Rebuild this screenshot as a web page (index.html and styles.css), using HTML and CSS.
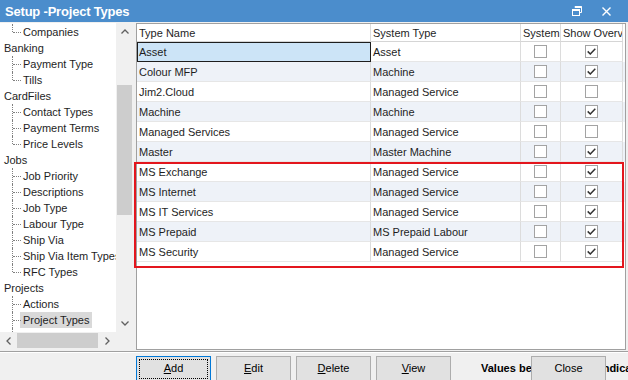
FILE: index.html
```html
<!DOCTYPE html>
<html lang="en">
<head>
    <meta charset="UTF-8">
    <title>Setup -Project Types</title>
    <link rel="stylesheet" href="styles.css">
</head>
<body>

    <div class="window">
        <!-- Title bar -->
        <div class="titlebar">
            <span class="title">Setup -Project Types</span>
            <div class="title-buttons">
                <svg width="10" height="10" viewBox="0 0 10 10">
                    <path d="M3 1.5V0.5H9.5V6.5H7.5" fill="none" stroke="#fff" stroke-width="1"/>
                    <path d="M3 1h6.5" stroke="#fff" stroke-width="2"/>
                    <rect x="0.5" y="3.5" width="7" height="6" fill="none" stroke="#fff" stroke-width="1"/>
                    <path d="M0.5 4h7" stroke="#fff" stroke-width="2"/>
                </svg>
                <svg width="9" height="9" viewBox="0 0 9 9">
                    <path d="M0.5 0.5L8.5 8.5M8.5 0.5L0.5 8.5" stroke="#fff" stroke-width="1.4"/>
                </svg>
            </div>
        </div>

        <div class="main">
            <!-- Setup tree -->
            <div class="tree-pane">
                <ul class="tree">
                    <li class="child last"><span class="label">Companies</span></li>
                    <li class="top"><span class="label">Banking</span></li>
                    <li class="child"><span class="label">Payment Type</span></li>
                    <li class="child last"><span class="label">Tills</span></li>
                    <li class="top"><span class="label">CardFiles</span></li>
                    <li class="child"><span class="label">Contact Types</span></li>
                    <li class="child"><span class="label">Payment Terms</span></li>
                    <li class="child last"><span class="label">Price Levels</span></li>
                    <li class="top"><span class="label">Jobs</span></li>
                    <li class="child"><span class="label">Job Priority</span></li>
                    <li class="child"><span class="label">Descriptions</span></li>
                    <li class="child"><span class="label">Job Type</span></li>
                    <li class="child"><span class="label">Labour Type</span></li>
                    <li class="child"><span class="label">Ship Via</span></li>
                    <li class="child"><span class="label">Ship Via Item Types</span></li>
                    <li class="child last"><span class="label">RFC Types</span></li>
                    <li class="top"><span class="label">Projects</span></li>
                    <li class="child"><span class="label">Actions</span></li>
                    <li class="child selected"><span class="label">Project Types</span></li>
                    <li class="child"><span class="label">Service Levels</span></li>
                </ul>

                <div class="vscroll">
                    <div class="arrow">
                        <svg width="8" height="5" viewBox="0 0 8 5"><path d="M0.5 4.5L4 1L7.5 4.5" fill="none" stroke="#606060" stroke-width="1.3"/></svg>
                    </div>
                    <div class="track-v"><div class="thumb-v"></div></div>
                    <div class="arrow">
                        <svg width="8" height="5" viewBox="0 0 8 5"><path d="M0.5 0.5L4 4L7.5 0.5" fill="none" stroke="#606060" stroke-width="1.3"/></svg>
                    </div>
                </div>

                <div class="hscroll">
                    <div class="arrow">
                        <svg width="5" height="8" viewBox="0 0 5 8"><path d="M4.5 0.5L1 4L4.5 7.5" fill="none" stroke="#606060" stroke-width="1.3"/></svg>
                    </div>
                    <div class="track-h"><div class="thumb-h"></div></div>
                    <div class="arrow">
                        <svg width="5" height="8" viewBox="0 0 5 8"><path d="M0.5 0.5L4 4L0.5 7.5" fill="none" stroke="#606060" stroke-width="1.3"/></svg>
                    </div>
                </div>
                <div class="corner"></div>
            </div>

            <!-- Project types grid -->
            <div class="grid-pane">
                <div class="grid-row grid-head">
                    <div class="cell">Type Name</div>
                    <div class="cell">System Type</div>
                    <div class="cell">System</div>
                    <div class="cell">Show Overview</div>
                </div>
                <div id="rows"></div>
            </div>

            <!-- marked rows -->
            <div class="mark-box"></div>
        </div>

        <!-- Buttons -->
        <div class="footer">
            <button class="btn btn-default"><u>A</u>dd</button>
            <button class="btn"><u>E</u>dit</button>
            <button class="btn"><u>D</u>elete</button>
            <button class="btn"><u>V</u>iew</button>
            <span class="legend">Values being used are indicated</span>
            <button class="btn close-btn">Close</button>
        </div>
    </div>

    <script type="text/javascript">
        //name, system type, system, show overview
        const types = [
            ['Asset', 'Asset', false, true],
            ['Colour MFP', 'Machine', false, true],
            ['Jim2.Cloud', 'Managed Service', false, false],
            ['Machine', 'Machine', false, true],
            ['Managed Services', 'Managed Service', false, false],
            ['Master', 'Master Machine', false, true],
            ['MS Exchange', 'Managed Service', false, true],
            ['MS Internet', 'Managed Service', false, true],
            ['MS IT Services', 'Managed Service', false, true],
            ['MS Prepaid', 'MS Prepaid Labour', false, true],
            ['MS Security', 'Managed Service', false, true]
        ];

        const tick = '<svg width="9" height="7" viewBox="0 0 9 7"><path d="M0.7 3.4L3.3 6L8.3 0.8" fill="none" stroke="#333" stroke-width="1.5"/></svg>';

        const checkbox = on => '<div class="cell check"><span class="box">' + (on ? tick : '') + '</span></div>';

        let html = '';
        types.forEach((t, i) => {
            html += '<div class="grid-row' + (i % 2 ? ' alt' : '') + '">'
                + '<div class="cell' + (i === 0 ? ' focus' : '') + '">' + t[0] + '</div>'
                + '<div class="cell">' + t[1] + '</div>'
                + checkbox(t[2]) + checkbox(t[3])
                + '</div>';
        });
        document.getElementById('rows').innerHTML = html;
    </script>
</body>
</html>
```

FILE: styles.css
```css
body {
    margin: 0;
    font-family: "Liberation Sans", Arial, sans-serif;
    font-size: 11px;
    color: #1e1e1e;
}

.window {
    width: 628px;
    height: 380px;
    background-color: #f0f0f0;
    display: flex;
    flex-direction: column;
    overflow: hidden;
}

/* Title bar */
.titlebar {
    height: 22px;
    flex: none;
    display: flex;
    align-items: center;
    background-color: #4b8dcc;
    color: #ffffff;
}

.title {
    padding-left: 5px;
    font-size: 13px;
    font-weight: bold;
    letter-spacing: -0.2px;
}

.title-buttons {
    margin-left: auto;
    padding-right: 17px;
    display: flex;
    align-items: center;
    gap: 20px;
}

.title-buttons svg {
    display: block;
}

/* Main area */
.main {
    position: relative;
    height: 329px;
    flex: none;
    display: flex;
    align-items: flex-start;
    padding-top: 1px;
    box-sizing: border-box;
}

/* Tree */
.tree-pane {
    width: 133px;
    height: 326px;
    display: grid;
    grid-template-columns: 116px 17px;
    grid-template-rows: 309px 17px;
}

.tree {
    list-style: none;
    margin: 0;
    padding: 1px 0 0;
    overflow: hidden;
    background-color: #ffffff;
}

.tree li {
    position: relative;
    height: 16px;
    line-height: 16px;
    white-space: nowrap;
}

.tree .top {
    padding-left: 1px;
}

.tree .child {
    padding-left: 20px;
}

.tree .child::before {
    content: "";
    position: absolute;
    left: 12px;
    top: 0;
    bottom: 0;
    border-left: 1px dotted #808080;
}

.tree .child.last::before {
    bottom: 8px;
}

.tree .child::after {
    content: "";
    position: absolute;
    left: 13px;
    top: 8px;
    width: 8px;
    border-top: 1px dotted #808080;
}

.tree .label {
    display: inline-block;
    padding: 1px 3px 0;
    line-height: 15px;
}

.tree .selected .label {
    background-color: #d9d9d9;
}

/* Scrollbars */
.vscroll, .hscroll, .corner {
    background-color: #f0f0f0;
}

.vscroll {
    display: flex;
    flex-direction: column;
}

.hscroll {
    display: flex;
}

.arrow {
    width: 17px;
    height: 17px;
    flex: none;
    display: flex;
    align-items: center;
    justify-content: center;
}

.arrow svg {
    display: block;
}

.track-v {
    flex: 1;
    padding: 0 1px;
}

.thumb-v {
    height: 130px;
    margin-top: 45px;
    background-color: #cdcdcd;
}

.track-h {
    flex: 1;
    padding: 1px 0;
}

.thumb-h {
    width: 81px;
    height: 15px;
    background-color: #cdcdcd;
}

/* Grid */
.grid-pane {
    width: 490px;
    height: 327px;
    margin-left: 3px;
    border: 1px solid #a0a0a0;
    background-color: #ffffff;
    box-sizing: border-box;
}

.grid-row {
    display: grid;
    grid-template-columns: 234px 150px 40px 62px;
    height: 20px;
}

.grid-row.alt {
    background-color: #eef2f8;
}

.cell {
    padding: 2px 0 0 2px;
    line-height: 17px;
    border-right: 1px solid #dcdcdc;
    border-bottom: 1px solid #e6e6e6;
    white-space: nowrap;
    overflow: hidden;
    box-sizing: border-box;
}

.grid-head {
    height: 18px;
}

.grid-head .cell {
    line-height: 15px;
    border-bottom-color: #d5d5d5;
}

.cell.focus {
    background-color: #cce4f7;
    outline: 1px solid #1e1e1e;
    outline-offset: -1px;
}

.cell.check {
    padding: 0;
    display: flex;
    align-items: center;
    justify-content: center;
}

.box {
    width: 13px;
    height: 13px;
    border: 1px solid #a3a3a3;
    background-color: #ffffff;
    box-sizing: border-box;
    display: flex;
    align-items: center;
    justify-content: center;
}

.box svg {
    display: block;
}

.mark-box {
    position: absolute;
    left: 134px;
    top: 140px;
    width: 490px;
    height: 106px;
    border: 2px solid #e3161d;
    box-sizing: border-box;
}

/* Footer */
.footer {
    position: relative;
    height: 29px;
    flex: none;
    display: flex;
    align-items: flex-start;
    gap: 5px;
    padding: 4px 0 0 136px;
    border-top: 1px solid #a0a0a0;
    box-shadow: inset 0 1px #ffffff;
    box-sizing: border-box;
}

.btn {
    width: 75px;
    height: 26px;
    flex: none;
    padding: 0 0 2px;
    border: 1px solid #adadad;
    background-color: #e1e1e1;
    font-family: "Liberation Sans", Arial, sans-serif;
    font-size: 11px;
    color: #000000;
}

.btn-default {
    border-color: #0078d7;
    outline: 1px dotted #000000;
    outline-offset: -4px;
}

.legend {
    margin-left: 25px;
    line-height: 24px;
    font-weight: bold;
    white-space: nowrap;
    color: #000000;
}

.close-btn {
    position: absolute;
    left: 531px;
    top: 4px;
}
```
